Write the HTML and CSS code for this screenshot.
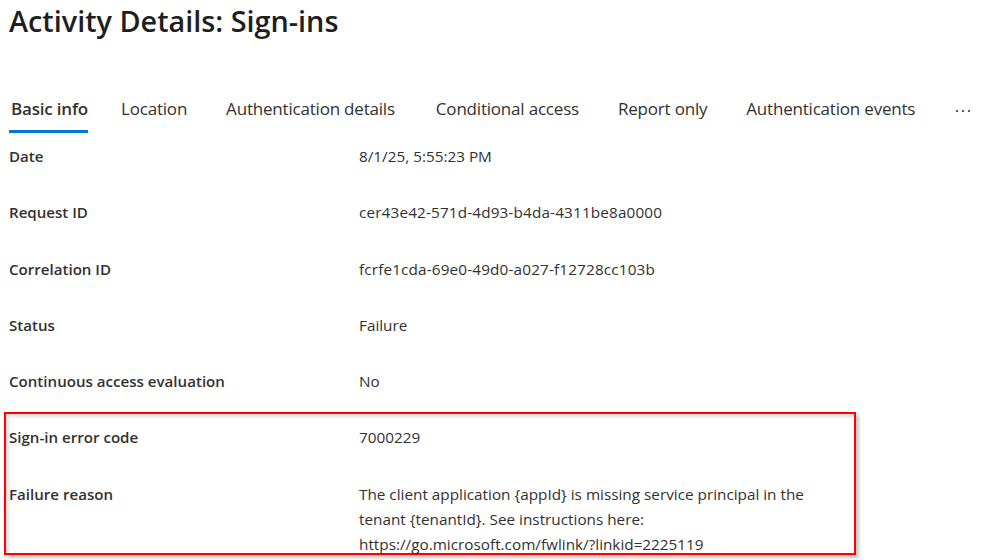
FILE: index.html
```html
<!DOCTYPE html>
<html>
<head>
<meta charset="utf-8">
<link rel="stylesheet" href="styles.css">
</head>
<body>
<div class="page">
  <h1 class="title">Activity Details: Sign-ins</h1>
  <nav class="tabs">
    <span class="tab active">Basic info</span>
    <span class="tab">Location</span>
    <span class="tab wide">Authentication details</span>
    <span class="tab">Conditional access</span>
    <span class="tab">Report only</span>
    <span class="tab">Authentication events</span>
    <span class="more" aria-label="More"><i></i><i></i><i></i></span>
  </nav>
  <div class="details">
    <div class="row"><div class="label">Date</div><div class="value">8/1/25, 5:55:23 PM</div></div>
    <div class="row"><div class="label">Request ID</div><div class="value id">cer43e42-571d-4d93-b4da-4311be8a0000</div></div>
    <div class="row"><div class="label">Correlation ID</div><div class="value id">fcrfe1cda-69e0-49d0-a027-f12728cc103b</div></div>
    <div class="row"><div class="label">Status</div><div class="value">Failure</div></div>
    <div class="row"><div class="label">Continuous access evaluation</div><div class="value">No</div></div>
    <div class="highlight">
      <div class="row"><div class="label">Sign-in error code</div><div class="value">7000229</div></div>
      <div class="row last"><div class="label">Failure reason</div><div class="value wrap">The client application {appId} is missing service principal in the tenant {tenantId}. See instructions here: https://go.microsoft.com/fwlink/?linkid=2225119</div></div>
    </div>
  </div>
</div>
</body>
</html>
```
FILE: styles.css
```css
* { box-sizing: border-box; }
html, body { margin: 0; padding: 0; background: #fff; }
body {
  font-family: "Open Sans", "Noto Sans", sans-serif;
  color: #323130;
  width: 996px;
  height: 560px;
  overflow: hidden;
}
.title {
  margin: 0;
  padding: 1px 0 0 9px;
  font-size: 28.8px;
  font-weight: 600;
  line-height: 40px;
  color: #201f1e;
}
.tabs {
  display: flex;
  margin-top: 53px;
  padding-left: 11px;
  height: 41px;
  align-items: flex-start;
}
.tab {
  position: relative;
  font-size: 17px;
  line-height: 30px;
  margin-right: 39px;
  color: #323130;
  letter-spacing: -0.2px;
  height: 41px;
}
.tab.wide { margin-right: 41px; }
.tab.active { font-weight: 600; margin-right: 33px; }
.tab.active::after {
  content: "";
  position: absolute;
  left: -2px; right: 0; bottom: 2px;
  height: 3px;
  background: #0078d4;
}
.more {
  display: flex;
  gap: 4px;
  margin-left: 2px;
  padding-top: 16px;
}
.more i {
  display: block;
  width: 2px;
  height: 2px;
  background: #605e5c;
}
.details { padding-left: 9px; margin-top: 7px; }
.row {
  display: flex;
  min-height: 56.3px;
  line-height: 25px;
  padding-top: 2px;
}
.label { width: 350px; font-weight: 600; font-size: 15.1px; color: #323130; flex: none; }
.value { color: #323130; font-size: 15.3px; }
.value.id { letter-spacing: 0.15px; }
.value.wrap { width: 470px; }
.highlight {
  margin-top: -11px;
  margin-left: -5px;
  width: 852px;
  height: 143px;
  border: 2px solid #ff0000;
  padding: 9px 0 0 3px;
  box-shadow: 3px 3px 3px rgba(0,0,0,0.22), inset 3px 3px 3px rgba(0,0,0,0.12);
}
.row.last { min-height: 0; }
```
